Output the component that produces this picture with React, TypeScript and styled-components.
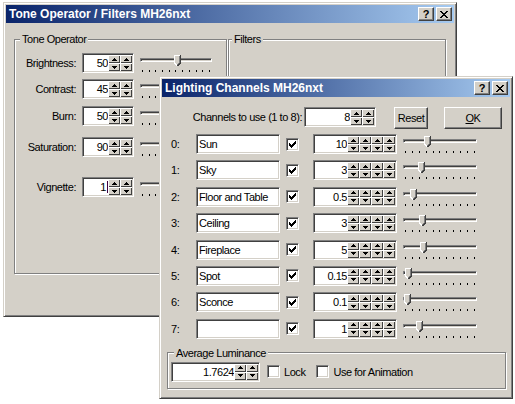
import React from "react";
import styled, { createGlobalStyle } from "styled-components";

const FACE = "#d4d0c8";
const SHADOW = "#808080";
const DARK = "#404040";
const LIGHT = "#ffffff";
const FONT = `"Liberation Sans", Arial, sans-serif`;

const Global = createGlobalStyle`
  html, body { margin: 0; padding: 0; background: #fff; }
  body { font-family: ${FONT}; font-size: 11px; letter-spacing: -0.45px; color: #000; }
  * { box-sizing: border-box; }
`;

const Desktop = styled.div`
  position: relative;
  width: 515px;
  height: 404px;
  overflow: hidden;
  background: #fff;
`;

const Window = styled.div<{ $x: number; $y: number; $w: number; $h: number; $z: number }>`
  position: absolute;
  left: ${(p) => p.$x}px;
  top: ${(p) => p.$y}px;
  width: ${(p) => p.$w}px;
  height: ${(p) => p.$h}px;
  z-index: ${(p) => p.$z};
  display: flex;
  flex-direction: column;
  background: ${FACE};
  border: 1px solid;
  border-color: ${FACE} ${DARK} ${DARK} ${FACE};
  box-shadow: inset 1px 1px ${LIGHT}, inset -1px -1px ${SHADOW};
  padding: 2px;
`;

const TitleBar = styled.div`
  flex: none;
  height: 18px;
  display: flex;
  align-items: center;
  padding: 0 2px 0 3px;
  background: linear-gradient(to right, #0a246a, #a6caf0);
  color: #fff;
  font: bold 12px "Liberation Sans", Arial, sans-serif;
  letter-spacing: 0;
`;

const TitleText = styled.span`
  flex: 1;
  white-space: nowrap;
`;

const CaptionButtons = styled.div`
  display: flex;
  gap: 2px;
`;

const CaptionButton = styled.div`
  width: 16px;
  height: 14px;
  background: ${FACE};
  border: 1px solid;
  border-color: ${LIGHT} ${DARK} ${DARK} ${LIGHT};
  box-shadow: inset -1px -1px ${SHADOW};
  display: flex;
  align-items: center;
  justify-content: center;
  color: #000;
  font: bold 11px "Liberation Sans", Arial, sans-serif;
  line-height: 12px;
`;

const ToneBody = styled.div`
  flex: 1;
  display: flex;
  align-items: flex-start;
  gap: 1px;
  padding: 9px 8px 0 8px;
`;

const Group = styled.fieldset<{ $w: number; $h: number }>`
  margin: 0;
  padding: 0;
  min-width: 0;
  width: ${(p) => p.$w}px;
  height: ${(p) => p.$h}px;
  border: 1px solid ${SHADOW};
  box-shadow: 1px 1px 0 ${LIGHT}, inset 1px 1px 0 ${LIGHT};
`;

const Legend = styled.legend<{ $ml?: number }>`
  margin-left: ${(p) => p.$ml ?? 5}px;
  padding: 0 2px;
  line-height: 14px;
  font-size: 11px;
  background: ${FACE};
`;

const ToneList = styled.div`
  display: flex;
  flex-direction: column;
  padding-top: 7px;
`;

const ToneRow = styled.div<{ $gap: number }>`
  display: grid;
  grid-template-columns: 61px 52px 72px;
  column-gap: 6px;
  align-items: center;
  height: 20px;
  margin-top: ${(p) => p.$gap}px;
`;

const RowLabel = styled.div`
  text-align: right;
  white-space: nowrap;
`;

/* ---------- Spin field ---------- */

const Field = styled.div<{ $w: number }>`
  width: ${(p) => p.$w}px;
  height: 20px;
  display: flex;
  background: #fff;
  border: 1px solid;
  border-color: ${SHADOW} ${LIGHT} ${LIGHT} ${SHADOW};
  box-shadow: inset 1px 1px ${DARK}, inset -1px -1px ${FACE};
  padding: 1px;
`;

const FieldValue = styled.div`
  flex: 1;
  min-width: 0;
  text-align: right;
  line-height: 16px;
  white-space: nowrap;
  overflow: hidden;
`;

const Caret = styled.span`
  display: inline-block;
  width: 1px;
  height: 12px;
  margin-left: 1px;
  vertical-align: -2px;
  background: #400040;
`;

const SpinCol = styled.div`
  width: 12px;
  display: flex;
  flex-direction: column;
`;

const SpinBtn = styled.div`
  flex: 1;
  display: flex;
  align-items: center;
  justify-content: center;
  background: ${FACE};
  box-shadow: inset 1px 1px ${LIGHT}, inset -1px -1px ${DARK};
`;

function Arrow({ down }: { down?: boolean }) {
  return (
    <svg width="5" height="3" viewBox="0 0 5 3" shapeRendering="crispEdges">
      {down ? (
        <>
          <rect x="0" y="0" width="5" height="1" fill="#000" />
          <rect x="1" y="1" width="3" height="1" fill="#000" />
          <rect x="2" y="2" width="1" height="1" fill="#000" />
        </>
      ) : (
        <>
          <rect x="2" y="0" width="1" height="1" fill="#000" />
          <rect x="1" y="1" width="3" height="1" fill="#000" />
          <rect x="0" y="2" width="5" height="1" fill="#000" />
        </>
      )}
    </svg>
  );
}

function Spin({ width, value, cols, caret }: { width: number; value: string; cols: number; caret?: boolean }) {
  return (
    <Field $w={width}>
      <FieldValue>
        {value}
        {caret && <Caret />}
      </FieldValue>
      {Array.from({ length: cols }).map((_, i) => (
        <SpinCol key={i}>
          <SpinBtn>
            <Arrow />
          </SpinBtn>
          <SpinBtn>
            <Arrow down />
          </SpinBtn>
        </SpinCol>
      ))}
    </Field>
  );
}

/* ---------- Slider ---------- */

const SliderBox = styled.div<{ $w: number }>`
  position: relative;
  width: ${(p) => p.$w}px;
  height: 20px;
`;

const Track = styled.div`
  margin-top: 5px;
  height: 4px;
  border: 1px solid;
  border-color: ${SHADOW} ${LIGHT} ${LIGHT} ${SHADOW};
  background: ${FACE};
  box-shadow: inset 1px 1px ${DARK};
`;

const Ticks = styled.div`
  display: flex;
  justify-content: space-between;
  padding: 0 2px;
  margin-top: 8px;
`;

const Tick = styled.span`
  width: 1px;
  height: 2px;
  background: #000;
`;

const ThumbWrap = styled.div<{ $x: number }>`
  position: absolute;
  top: 2px;
  left: ${(p) => p.$x - 3}px;
  width: 7px;
  height: 11px;
  line-height: 0;
`;

function Slider({ width, pos }: { width: number; pos: number }) {
  return (
    <SliderBox $w={width}>
      <Track />
      <Ticks>
        {Array.from({ length: 11 }).map((_, i) => (
          <Tick key={i} />
        ))}
      </Ticks>
      <ThumbWrap $x={pos}>
        <svg width="7" height="11" viewBox="0 0 7 11" shapeRendering="crispEdges">
          <polygon points="0,0 7,0 7,8 3.5,11 0,8" fill={FACE} />
          <polyline points="0.5,8 0.5,0.5 6,0.5" fill="none" stroke={LIGHT} strokeWidth="1" />
          <polyline points="5.5,1 5.5,8 3.5,10" fill="none" stroke={SHADOW} strokeWidth="1" />
          <polyline points="6.5,0 6.5,8 3.5,11" fill="none" stroke={DARK} strokeWidth="1" />
          <line x1="0.5" y1="8" x2="3" y2="10.5" stroke={LIGHT} strokeWidth="1" />
        </svg>
      </ThumbWrap>
    </SliderBox>
  );
}

/* ---------- Window 2 ---------- */

const ChannelBody = styled.div`
  flex: 1;
  display: flex;
  flex-direction: column;
  padding: 10px 4px 0 5px;
`;

const TopRow = styled.div`
  display: flex;
  align-items: flex-start;
  padding-left: 4px;
`;

const TopLabel = styled.div`
  width: 131px;
  margin-right: 2px;
  text-align: right;
  line-height: 20px;
  white-space: nowrap;
`;

const PushButton = styled.div<{ $w: number; $ml: number }>`
  width: ${(p) => p.$w}px;
  height: 22px;
  margin-left: ${(p) => p.$ml}px;
  display: flex;
  align-items: center;
  justify-content: center;
  background: ${FACE};
  border: 1px solid;
  border-color: ${LIGHT} ${DARK} ${DARK} ${LIGHT};
  box-shadow: inset -1px -1px ${SHADOW};
`;

const ChannelGrid = styled.div`
  display: grid;
  grid-template-columns: 25px 90px 27px 90px 74px;
  grid-auto-rows: 20px;
  row-gap: 6.4px;
  align-items: center;
  margin-top: 5px;
  padding-left: 4px;
`;

const Index = styled.div`
  white-space: nowrap;
`;

const TextBox = styled.div<{ $w: number }>`
  width: ${(p) => p.$w}px;
  height: 20px;
  background: #fff;
  border: 1px solid;
  border-color: ${SHADOW} ${LIGHT} ${LIGHT} ${SHADOW};
  box-shadow: inset 1px 1px ${DARK}, inset -1px -1px ${FACE};
  padding: 0 2px;
  line-height: 18px;
  white-space: nowrap;
  overflow: hidden;
`;

const CheckBox = styled.div`
  width: 13px;
  height: 13px;
  background: #fff;
  border: 1px solid;
  border-color: ${SHADOW} ${LIGHT} ${LIGHT} ${SHADOW};
  box-shadow: inset 1px 1px ${DARK}, inset -1px -1px ${FACE};
  display: flex;
  align-items: center;
  justify-content: center;
  line-height: 0;
`;

function Check({ on }: { on?: boolean }) {
  return (
    <CheckBox>
      {on && (
        <svg width="7" height="7" viewBox="0 0 7 7" shapeRendering="crispEdges">
          <rect x="6" y="0" width="1" height="3" fill="#000" />
          <rect x="5" y="1" width="1" height="3" fill="#000" />
          <rect x="4" y="2" width="1" height="3" fill="#000" />
          <rect x="3" y="3" width="1" height="3" fill="#000" />
          <rect x="2" y="4" width="1" height="3" fill="#000" />
          <rect x="1" y="3" width="1" height="3" fill="#000" />
          <rect x="0" y="2" width="1" height="3" fill="#000" />
        </svg>
      )}
    </CheckBox>
  );
}

const LumGroup = styled(Group)`
  margin-top: 7px;
`;

const LumRow = styled.div`
  display: flex;
  align-items: center;
  padding: 2px 0 0 3px;
`;

const CheckLabel = styled.span<{ $ml: number }>`
  margin-left: ${(p) => p.$ml}px;
  white-space: nowrap;
`;

const CheckSpacer = styled.div<{ $ml: number }>`
  margin-left: ${(p) => p.$ml}px;
`;

function CaptionGlyphs() {
  return (
    <CaptionButtons>
      <CaptionButton>?</CaptionButton>
      <CaptionButton>
        <svg width="8" height="7" viewBox="0 0 8 7" shapeRendering="crispEdges">
          <path d="M0 0h2v1h-2zM6 0h2v1h-2zM1 1h2v1h-2zM5 1h2v1h-2zM2 2h4v1h-4zM3 3h2v1h-2zM2 4h4v1h-4zM1 5h2v1h-2zM5 5h2v1h-2zM0 6h2v1h-2zM6 6h2v1h-2z" fill="#000" />
        </svg>
      </CaptionButton>
    </CaptionButtons>
  );
}

const toneRows = [
  { label: "Brightness", value: "50", gap: 0, pos: 37 },
  { label: "Contrast", value: "45", gap: 6, pos: 37 },
  { label: "Burn", value: "50", gap: 7, pos: 37 },
  { label: "Saturation", value: "90", gap: 11, pos: 45 },
  { label: "Vignette", value: "1", gap: 20, pos: 40, caret: true },
];

const channels = [
  { name: "Sun", value: "10", pos: 24 },
  { name: "Sky", value: "3", pos: 18 },
  { name: "Floor and Table", value: "0.5", pos: 10 },
  { name: "Ceiling", value: "3", pos: 19 },
  { name: "Fireplace", value: "5", pos: 20 },
  { name: "Spot", value: "0.15", pos: 5 },
  { name: "Sconce", value: "0.1", pos: 4 },
  { name: "", value: "1", pos: 16 },
];

export default function App() {
  return (
    <>
      <Global />
      <Desktop>
        <Window $x={3} $y={2} $w={454} $h={315} $z={1}>
          <TitleBar>
            <TitleText>Tone Operator / Filters MH26nxt</TitleText>
            <CaptionGlyphs />
          </TitleBar>
          <ToneBody>
            <Group $w={213} $h={242}>
              <Legend>Tone Operator</Legend>
              <ToneList>
                {toneRows.map((r) => (
                  <ToneRow key={r.label} $gap={r.gap}>
                    <RowLabel>{r.label}:</RowLabel>
                    <Spin width={52} value={r.value} cols={2} caret={r.caret} />
                    <Slider width={72} pos={r.pos} />
                  </ToneRow>
                ))}
              </ToneList>
            </Group>
            <Group $w={218} $h={242}>
              <Legend $ml={3}>Filters</Legend>
            </Group>
          </ToneBody>
        </Window>

        <Window $x={159} $y={76} $w={354} $h={323} $z={2}>
          <TitleBar>
            <TitleText>Lighting Channels MH26nxt</TitleText>
            <CaptionGlyphs />
          </TitleBar>
          <ChannelBody>
            <TopRow>
              <TopLabel>Channels to use (1 to 8):</TopLabel>
              <Spin width={72} value="8" cols={2} />
              <PushButton $w={34} $ml={18}>Reset</PushButton>
              <PushButton $w={58} $ml={16}>
                <span>
                  <u>O</u>K
                </span>
              </PushButton>
            </TopRow>
            <ChannelGrid>
              {channels.map((c, i) => (
                <React.Fragment key={i}>
                  <Index>{i}:</Index>
                  <TextBox $w={84}>{c.name}</TextBox>
                  <Check on />
                  <Spin width={84} value={c.value} cols={4} />
                  <Slider width={74} pos={c.pos} />
                </React.Fragment>
              ))}
            </ChannelGrid>
            <LumGroup $w={339} $h={43}>
              <Legend $ml={6}>Average Luminance</Legend>
              <LumRow>
                <Spin width={89} value="1.7624" cols={2} />
                <CheckSpacer $ml={7}>
                  <Check />
                </CheckSpacer>
                <CheckLabel $ml={4}>Lock</CheckLabel>
                <CheckSpacer $ml={11}>
                  <Check />
                </CheckSpacer>
                <CheckLabel $ml={4}>Use for Animation</CheckLabel>
              </LumRow>
            </LumGroup>
          </ChannelBody>
        </Window>
      </Desktop>
    </>
  );
}
